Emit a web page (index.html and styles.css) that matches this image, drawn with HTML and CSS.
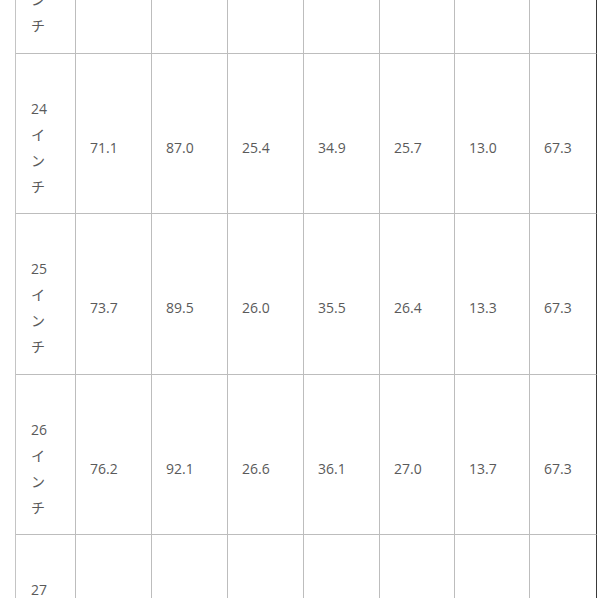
FILE: index.html
```html
<!DOCTYPE html>
<html lang="ja">
<head>
<meta charset="utf-8">
<link rel="stylesheet" href="styles.css">
</head>
<body>
<div class="sheet">
  <div class="row">
    <div class="cell size"><div class="label">23インチ</div></div>
    <div class="cell">68.6</div><div class="cell">84.5</div><div class="cell">24.8</div><div class="cell">34.3</div><div class="cell">25.1</div><div class="cell">12.7</div><div class="cell last">67.3</div>
  </div>
  <div class="row">
    <div class="cell size"><div class="label">24インチ</div></div>
    <div class="cell">71.1</div><div class="cell">87.0</div><div class="cell">25.4</div><div class="cell">34.9</div><div class="cell">25.7</div><div class="cell">13.0</div><div class="cell last">67.3</div>
  </div>
  <div class="row">
    <div class="cell size"><div class="label">25インチ</div></div>
    <div class="cell">73.7</div><div class="cell">89.5</div><div class="cell">26.0</div><div class="cell">35.5</div><div class="cell">26.4</div><div class="cell">13.3</div><div class="cell last">67.3</div>
  </div>
  <div class="row">
    <div class="cell size"><div class="label">26インチ</div></div>
    <div class="cell">76.2</div><div class="cell">92.1</div><div class="cell">26.6</div><div class="cell">36.1</div><div class="cell">27.0</div><div class="cell">13.7</div><div class="cell last">67.3</div>
  </div>
  <div class="row">
    <div class="cell size"><div class="label">27インチ</div></div>
    <div class="cell">78.7</div><div class="cell">94.6</div><div class="cell">27.2</div><div class="cell">36.7</div><div class="cell">27.6</div><div class="cell">14.0</div><div class="cell last">67.3</div>
  </div>
</div>
</body>
</html>
```
FILE: styles.css
```css
html, body {
  margin: 0;
  padding: 0;
  background: #ffffff;
  overflow: hidden;
  height: 598px;
}
body {
  font-family: "Open Sans", "Noto Sans CJK JP", sans-serif;
  font-size: 14px;
  color: #5a5a5a;
}
.sheet {
  margin-top: -107px;
  margin-left: 15px;
  width: 582px;
  border-left: 1px solid #c4c4c4;
}
.row {
  display: grid;
  grid-template-columns: 60px 76px 76px 76px 76px 75px 75px 67px;
  height: 160.5px;
}
.cell {
  box-sizing: border-box;
  border-right: 1px solid #bdbdbd;
  border-bottom: 1px solid #bdbdbd;
  padding: 29px 0 0 14px;
  display: flex;
  align-items: center;
  line-height: 18px;
}
.cell.last {
  border-right: 1px solid #3a3a3a;
}
.size {
  padding-left: 15px;
}
.label {
  width: 20px;
  line-height: 26px;
  word-break: break-all;
}
```
